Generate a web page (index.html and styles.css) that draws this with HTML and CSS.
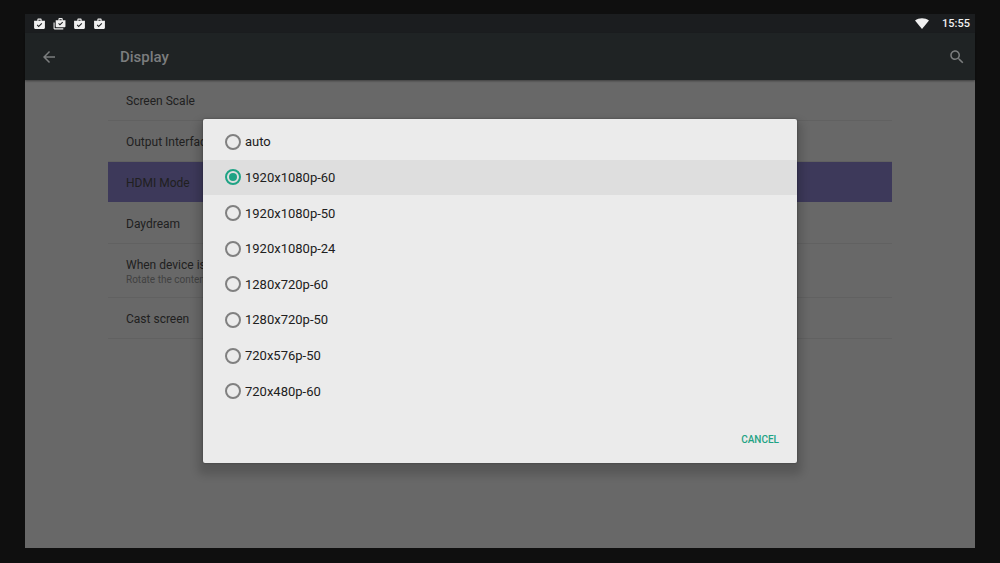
FILE: index.html
```html
<!DOCTYPE html>
<html lang="en">
<head>
  <meta charset="UTF-8" />
  <meta name="viewport" content="width=device-width, initial-scale=1.0"/>
  <title>Display</title>
  <link rel="stylesheet" href="styles.css">
</head>
<body>
  <svg width="0" height="0" class="sprite" aria-hidden="true">
    <symbol id="shop" viewBox="0 0 24 24">
      <path fill-rule="evenodd" d="M16 6V4c0-1.100-.89-2-2-2h-4c-1.110 0-2 .89-2 2v2H2v13c0 1.110.89 2 2 2h16c1.110 0 2-.89 2-2V6h-6zm-6-2h4v2h-4V4zm.5 14L7 14.500l1.400-1.400 2.100 2.100 5.100-5.100 1.400 1.400z"/>
    </symbol>
    <symbol id="shop-two" viewBox="0 0 24 24">
      <path fill-rule="evenodd" d="M3 9H1v11c0 1.110.89 2 2 2h16v-2H3V9zM18 5V3c0-1.110-.89-2-2-2h-4c-1.110 0-2 .89-2 2v2H5v11c0 1.110.89 2 2 2h14c1.110 0 2-.89 2-2V5h-5zm-6-2h4v2h-4V3zm.8 11.800L9.600 11.600l1.300-1.300 1.900 1.900 4.500-4.500 1.300 1.300z"/>
    </symbol>
  </svg>

  <div class="screen">
    <div class="status-bar">
      <svg class="notification"><use href="#shop"/></svg>
      <svg class="notification"><use href="#shop-two"/></svg>
      <svg class="notification"><use href="#shop"/></svg>
      <svg class="notification"><use href="#shop"/></svg>
      <svg class="wifi" viewBox="0 0 14 11"><path d="M0 2.500C4 -.5 10 -.5 14 2.500L7 11z"/></svg>
      <time>15:55</time>
    </div>

    <header class="app-bar">
      <button class="icon-button" aria-label="Back">
        <svg viewBox="0 0 24 24"><path d="M20 11H7.830l5.590-5.590L12 4l-8 8 8 8 1.410-1.410L7.830 13H20v-2z"/></svg>
      </button>
      <h1>Display</h1>
      <button class="icon-button" aria-label="Search">
        <svg viewBox="0 0 24 24"><path d="M15.500 14h-.79l-.28-.27C15.410 12.590 16 11.110 16 9.500 16 5.910 13.090 3 9.500 3S3 5.910 3 9.500 5.910 16 9.500 16c1.610 0 3.090-.59 4.230-1.570l.27.28v.79l5 4.990L20.490 19l-4.990-5zm-6 0C7.010 14 5 11.990 5 9.500S7.010 5 9.500 5 14 7.010 14 9.500 11.990 14 9.500 14z"/></svg>
      </button>
    </header>

    <main>
      <ul class="settings">
        <li>Screen Scale</li>
        <li>Output Interface</li>
        <li class="active">HDMI Mode</li>
        <li>Daydream</li>
        <li class="two-line">When device is rotated <small>Rotate the contents</small></li>
        <li>Cast screen</li>
      </ul>
    </main>

    <div class="overlay">
      <form class="dialog" role="dialog" aria-label="HDMI Mode">
        <div class="options">
          <label><input type="radio" name="mode">auto</label>
          <label><input type="radio" name="mode" checked>1920x1080p-60</label>
          <label><input type="radio" name="mode">1920x1080p-50</label>
          <label><input type="radio" name="mode">1920x1080p-24</label>
          <label><input type="radio" name="mode">1280x720p-60</label>
          <label><input type="radio" name="mode">1280x720p-50</label>
          <label><input type="radio" name="mode">720x576p-50</label>
          <label><input type="radio" name="mode">720x480p-60</label>
        </div>
        <div class="actions">
          <button type="button">CANCEL</button>
        </div>
      </form>
    </div>
  </div>
</body>
</html>
```

FILE: styles.css
```css
* {
  box-sizing: border-box;
}
body {
  font-family: Roboto, sans-serif;
  background-color: #0f0f0f;
  color: #202020;
  margin: 0;
  padding: 14px 25px 15px;
  min-height: 100vh;
  display: flex;
}
button {
  background: none;
  border: 0;
  padding: 0;
  font-family: inherit;
}
.sprite {
  position: absolute;
}
.screen {
  position: relative;
  flex: 1;
  background-color: #686868;
}

/* status bar */
.status-bar {
  display: flex;
  align-items: center;
  gap: 7px;
  height: 19px;
  padding: 0 5px 0 8px;
  background-color: #1b1d1f;
  color: #f0f0f0;
  fill: #f0f0f0;
}
.notification {
  width: 13px;
  height: 14px;
}
.wifi {
  width: 14px;
  height: 11px;
  margin-left: auto;
  margin-right: 6px;
}
time {
  font-size: 11px;
  font-weight: 500;
}

/* app bar */
.app-bar {
  display: flex;
  align-items: center;
  height: 47px;
  padding: 0 9px 0 15px;
  background-color: #1f2324;
  color: #7b7d7e;
  box-shadow: 0 1px 2px rgba(0,0,0,0.4);
}
.app-bar h1 {
  flex: 1;
  margin: 0 0 0 62px;
  font-size: 15px;
  font-weight: 500;
}
.icon-button {
  width: 18px;
  height: 18px;
}
.icon-button svg {
  display: block;
  fill: #7b7d7e;
}

/* settings list */
.settings {
  list-style: none;
  margin: 0 83px;
  padding: 0;
  font-size: 12px;
}
.settings li {
  display: flex;
  flex-direction: column;
  justify-content: center;
  height: 41px;
  padding: 2px 18px 0;
  border-bottom: 1px solid #616161;
}
.settings .active {
  background-color: #3d395a;
  background-clip: padding-box;
  border-color: transparent;
}
.settings .two-line {
  height: 54px;
}
.settings small {
  margin-top: 2px;
  font-size: 10px;
  color: #414141;
}

/* dialog */
.overlay {
  position: absolute;
  inset: 20px 0 0;
  display: flex;
  align-items: center;
  justify-content: center;
}
.dialog {
  width: 63%;
  max-width: 594px;
  padding-top: 5px;
  background-color: #ebebeb;
  border-radius: 2px;
  box-shadow: 0 7px 8px 5px rgba(0,0,0,0.16), 0 0 2px rgba(0,0,0,0.4);
}
.options {
  display: grid;
  grid-auto-rows: 1fr;
  height: 285px;
}
.options label {
  display: flex;
  align-items: center;
  gap: 4px;
  padding-left: 22px;
  font-size: 13px;
}
.options label:has(:checked) {
  background-color: #dedede;
}
.options input {
  appearance: none;
  display: grid;
  place-items: center;
  width: 16px;
  height: 16px;
  margin: 0;
  border: 2px solid #808080;
  border-radius: 50%;
}
.options input:checked {
  border-color: #1fa385;
}
.options input:checked::before {
  content: "";
  width: 8px;
  height: 8px;
  border-radius: 50%;
  background-color: #1fa385;
}
.actions {
  display: flex;
  align-items: center;
  justify-content: flex-end;
  height: 54px;
  padding: 6px 18px 0 0;
}
.actions button {
  font-size: 10px;
  font-weight: 500;
  color: #1fa385;
}
```
